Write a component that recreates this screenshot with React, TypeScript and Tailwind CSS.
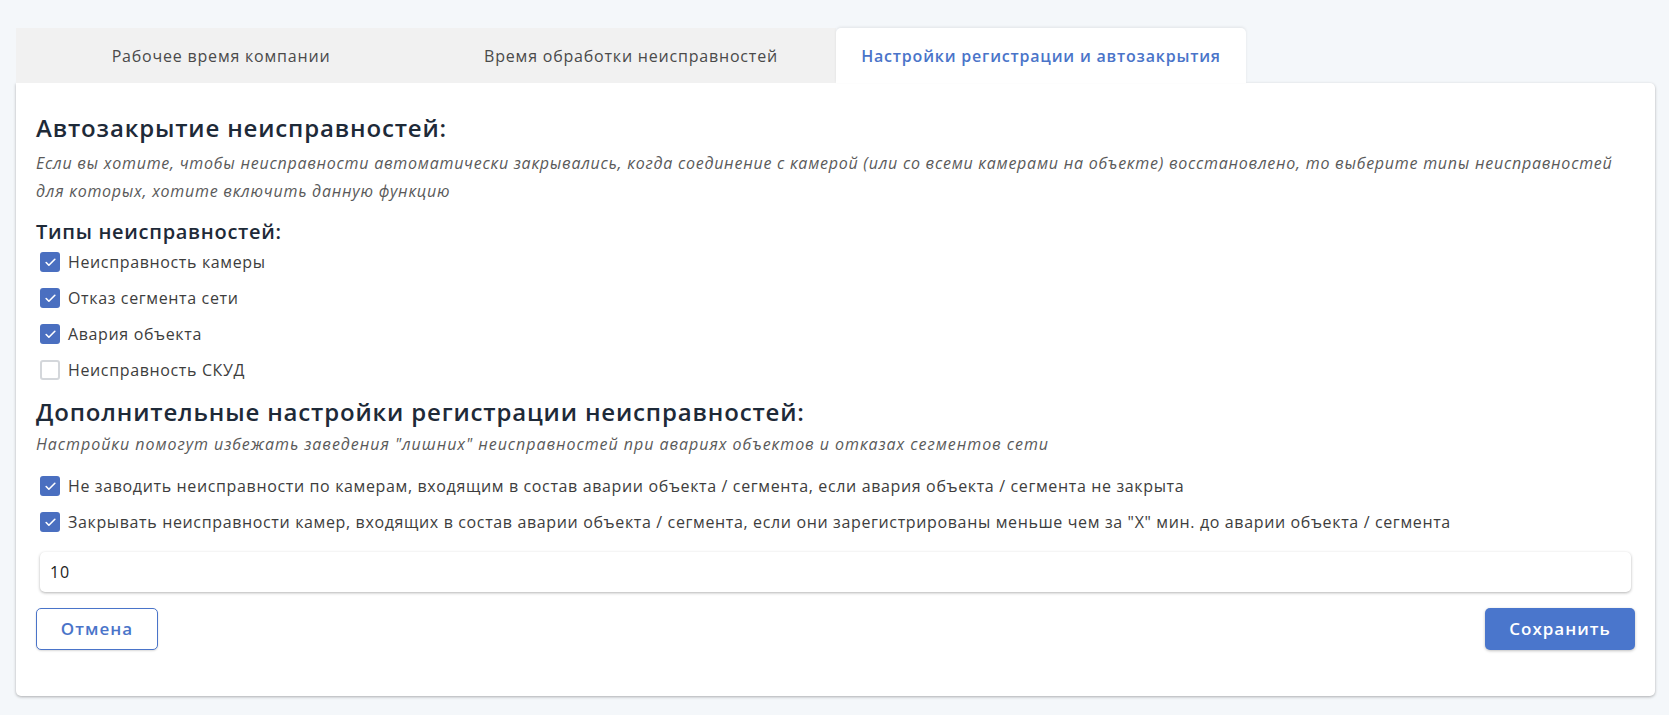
import { useState } from 'react'
import { Check } from 'lucide-react'

const tabs = [
  'Рабочее время компании',
  'Время обработки неисправностей',
  'Настройки регистрации и автозакрытия',
]

const faultTypes = [
  { label: 'Неисправность камеры', checked: true },
  { label: 'Отказ сегмента сети', checked: true },
  { label: 'Авария объекта', checked: true },
  { label: 'Неисправность СКУД', checked: false },
]

const extraOptions = [
  {
    label:
      'Не заводить неисправности по камерам, входящим в состав аварии объекта / сегмента, если авария объекта / сегмента не закрыта',
    checked: true,
  },
  {
    label:
      'Закрывать неисправности камер, входящих в состав аварии объекта / сегмента, если они зарегистрированы меньше чем за "Х" мин. до аварии объекта / сегмента',
    checked: true,
  },
]

function CheckRow({ label, checked }: { label: string; checked: boolean }) {
  const [on, setOn] = useState(checked)
  return (
    <div className="flex h-[36px] items-center gap-2 pl-1">
      <span
        onClick={() => setOn(!on)}
        className={
          on
            ? 'flex h-[20px] w-[20px] cursor-pointer items-center justify-center rounded-[3px] bg-[#4a6fc0]'
            : 'flex h-[20px] w-[20px] cursor-pointer items-center justify-center rounded-[3px] border-2 border-[#d4d7db] bg-white'
        }
      >
        {on && <Check className="h-[13px] w-[13px] text-white" strokeWidth={3} />}
      </span>
      <span className="text-[16px] tracking-[0.04em] text-[#3d3d3d]">{label}</span>
    </div>
  )
}

export default function App() {
  const [active, setActive] = useState(2)

  return (
    <div
      className="min-h-screen w-full bg-[#f4f7fa] px-[16px] pt-[28px]"
      style={{ fontFamily: '"Open Sans", "Noto Sans", sans-serif' }}
    >
      <div className="w-[1639px]">
        {/* Tabs */}
        <div className="flex">
          {tabs.map((t, i) => (
            <button
              key={t}
              onClick={() => setActive(i)}
              className={
                i === active
                  ? 'relative z-10 h-[55px] w-[410px] rounded-t-[5px] bg-white text-[16px] font-semibold tracking-[0.05em] text-[#4a74c9] shadow-[0_-1px_3px_rgba(0,0,0,0.08)]'
                  : 'h-[55px] w-[410px] bg-[#f1f1f1] text-[16px] tracking-[0.05em] text-[#4a4a4a]'
              }
            >
              {t}
            </button>
          ))}
        </div>

        {/* Card body */}
        <div className="rounded-b-[5px] rounded-tr-[5px] bg-white px-[20px] pb-[46px] pt-[29px] shadow-[0_1px_3px_rgba(0,0,0,0.3)]">
          <h2 className="text-[24px] font-semibold leading-[32px] tracking-[0.035em] text-[#1e2a38]">
            Автозакрытие неисправностей:
          </h2>
          <p className="mt-[5px] text-[16px] italic leading-[28px] tracking-[0.047em] text-[#5a5a5a]">
            Если вы хотите, чтобы неисправности автоматически закрывались, когда соединение с камерой (или со всеми
            камерами на объекте) восстановлено, то выберите типы неисправностей
            <br />
            для которых, хотите включить данную функцию
          </p>

          <h3 className="mt-[15px] text-[20px] font-semibold leading-[24px] tracking-[0.035em] text-[#1e2a38]">
            Типы неисправностей:
          </h3>
          <div className="flex flex-col">
            {faultTypes.map((f) => (
              <CheckRow key={f.label} label={f.label} checked={f.checked} />
            ))}
          </div>

          <h2 className="mt-[8px] text-[24px] font-semibold leading-[32px] tracking-[0.035em] text-[#1e2a38]">
            Дополнительные настройки регистрации неисправностей:
          </h2>
          <p className="mt-[4px] text-[16px] italic leading-[24px] tracking-[0.06em] text-[#5a5a5a]">
            Настройки помогут избежать заведения "лишних" неисправностей при авариях объектов и отказах сегментов сети
          </p>

          <div className="mt-[12px] flex flex-col">
            {extraOptions.map((f) => (
              <CheckRow key={f.label} label={f.label} checked={f.checked} />
            ))}
          </div>

          <div className="mx-1 mt-[12px]">
            <input
              defaultValue="10"
              className="h-[40px] w-full rounded-[5px] bg-white px-[10px] text-[16px] tracking-[0.05em] text-[#222] shadow-[0_1px_3px_rgba(0,0,0,0.3)] outline-none"
            />
          </div>

          <div className="mt-[16px] flex items-center justify-between">
            <button className="h-[42px] w-[122px] rounded-[5px] border border-[#4a74c9] bg-white text-[17px] font-semibold tracking-[0.06em] text-[#4a74c9] shadow-[0_1px_2px_rgba(0,0,0,0.15)]">
              Отмена
            </button>
            <button className="h-[42px] w-[150px] rounded-[5px] bg-[#4a76cc] text-[17px] font-semibold tracking-[0.06em] text-white shadow-[0_1px_3px_rgba(0,0,0,0.25)]">
              Сохранить
            </button>
          </div>
        </div>
      </div>
    </div>
  )
}
